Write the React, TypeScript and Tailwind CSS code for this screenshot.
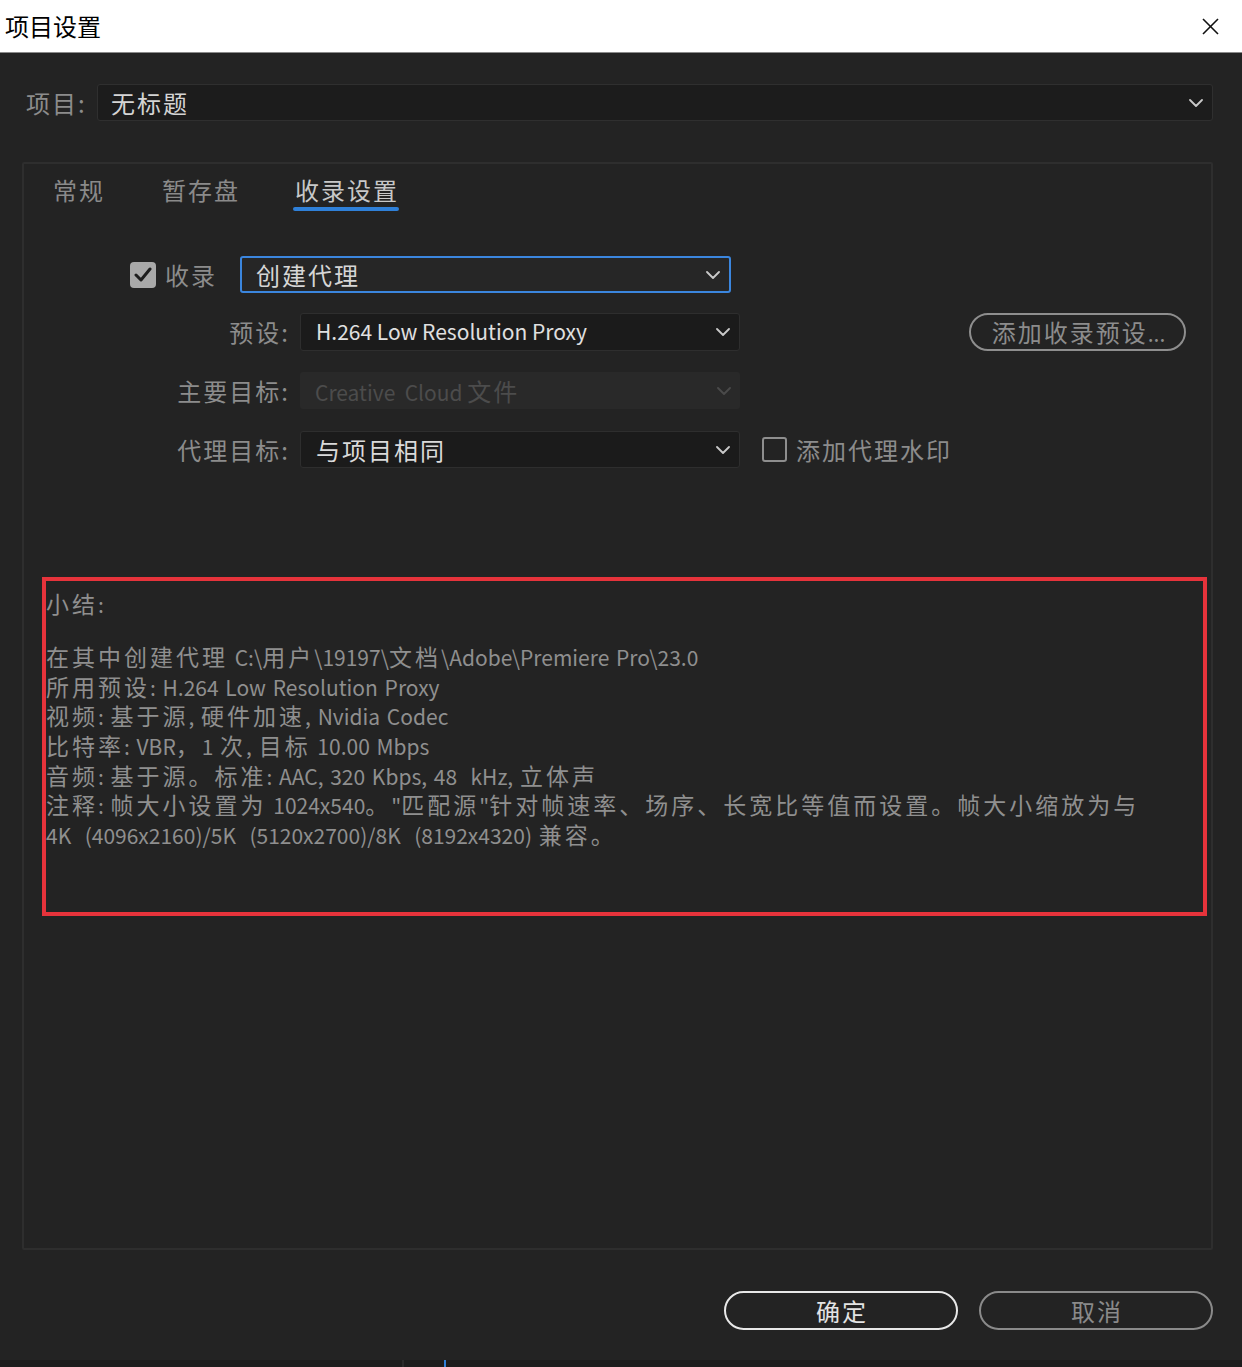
import React from "react";

const CJK_RE = /([\u3000-\u303f\u3400-\u9fff\uff00-\uffef]+)/;

function Mixed({ text, cjk }: { text: string; cjk: string }) {
  const parts = text.split(CJK_RE);
  return (
    <>
      {parts.map((p, i) =>
        p === "" ? null : CJK_RE.test(p) ? (
          <span key={i} className={cjk}>
            {p}
          </span>
        ) : (
          <React.Fragment key={i}>{p}</React.Fragment>
        )
      )}
    </>
  );
}

const Chevron = ({ color = "#c9c9c9" }: { color?: string }) => (
  <svg width="14" height="8" viewBox="0 0 14 8" fill="none">
    <polyline points="1,1 7,7 13,1" stroke={color} strokeWidth="1.8" strokeLinecap="round" strokeLinejoin="round" />
  </svg>
);

const summary = [
  "在其中创建代理 C:\\用户\\19197\\文档\\Adobe\\Premiere Pro\\23.0",
  "所用预设: H.264 Low Resolution Proxy",
  "视频: 基于源, 硬件加速, Nvidia Codec",
  "比特率: VBR，1 次, 目标 10.00 Mbps",
  "音频: 基于源。标准: AAC, 320 Kbps, 48  kHz, 立体声",
  "注释: 帧大小设置为 1024x540。\"匹配源\"针对帧速率、场序、长宽比等值而设置。帧大小缩放为与",
  "4K  (4096x2160)/5K  (5120x2700)/8K  (8192x4320) 兼容。",
];

export default function App() {
  return (
    <div className="w-[1242px] h-[1367px] bg-[#232323] flex flex-col font-['Noto_Sans_CJK_SC','Noto_Sans',sans-serif] overflow-hidden">
      {/* Title bar */}
      <div className="h-[53px] bg-white border-b border-[#8a8a8a] flex items-center justify-between pl-[5px] pr-[23px] shrink-0">
        <span className="text-[24px] text-black leading-none">项目设置</span>
        <svg width="17" height="17" viewBox="0 0 17 17">
          <line x1="1" y1="1" x2="16" y2="16" stroke="#111" strokeWidth="1.6" />
          <line x1="16" y1="1" x2="1" y2="16" stroke="#111" strokeWidth="1.6" />
        </svg>
      </div>

      <div className="flex-1 flex flex-col pl-[22px] pr-[29px]">
        {/* Project row */}
        <div className="mt-[31px] flex items-center h-[37px] pl-[4px]">
          <span className="text-[24px] tracking-[2px] text-[#8c8c8c] w-[71px]">项目:</span>
          <div className="flex-1 h-[37px] bg-[#1c1c1c] border border-[#2f2f2f] rounded-[3px] flex items-center justify-between pl-[13px] pr-[9px]">
            <span className="text-[24px] tracking-[2px] text-[#d4d4d4]">无标题</span>
            <Chevron />
          </div>
        </div>

        {/* Panel */}
        <div className="mt-[41px] h-[1088px] border-2 border-[#2e2e2e] rounded-[2px] flex flex-col">
          {/* Tabs */}
          <div className="flex items-start pl-[29px] mt-[10px] h-[37px]">
            <span className="text-[24px] tracking-[2px] text-[#8a8a8a] leading-[32px]">常规</span>
            <span className="text-[24px] tracking-[2px] text-[#8a8a8a] leading-[32px] ml-[57px]">暂存盘</span>
            <div className="ml-[53px] flex flex-col">
              <span className="text-[24px] tracking-[2px] text-[#c8c8c8] leading-[32px] pl-[2px]">收录设置</span>
              <div className="h-[4px] bg-[#2f80d8] rounded-full mt-[1px]" />
            </div>
          </div>

          {/* Row 1 */}
          <div className="mt-[45px] flex items-center h-[37px]">
            <div className="ml-[106px] w-[26px] h-[26px] bg-[#a9a9a9] rounded-[4px] flex items-center justify-center">
              <svg width="18" height="16" viewBox="0 0 18 16">
                <polyline points="2,8 7,13 16,2" fill="none" stroke="#1e1e1e" strokeWidth="3" strokeLinecap="round" strokeLinejoin="round" />
              </svg>
            </div>
            <span className="ml-[9px] text-[24px] tracking-[2px] text-[#8c8c8c]">收录</span>
            <div className="ml-[23px] w-[491px] h-[37px] bg-[#262626] border-2 border-[#3b86de] rounded-[3px] flex items-center justify-between pl-[14px] pr-[9px]">
              <span className="text-[24px] tracking-[2px] text-[#d6d6d6]">创建代理</span>
              <Chevron />
            </div>
          </div>

          {/* Row 2 */}
          <div className="mt-[20px] flex items-center h-[38px]">
            <span className="w-[266px] text-right text-[24px] tracking-[2px] text-[#8c8c8c]">预设:</span>
            <div className="ml-[10px] w-[440px] h-[38px] bg-[#1b1b1b] border border-[#2e2e2e] rounded-[3px] flex items-center justify-between pl-[15px] pr-[9px]">
              <span className="text-[21px] text-[#e0e0e0]">H.264 Low Resolution Proxy</span>
              <Chevron />
            </div>
            <div className="ml-auto mr-[25px] w-[217px] h-[38px] border-2 border-[#8e8e8e] rounded-full flex items-center justify-center pl-[2px]">
              <span className="text-[21px] text-[#8c8c8c] leading-none">
                <span className="text-[24px] tracking-[2px]">添加收录预设</span>...
              </span>
            </div>
          </div>

          {/* Row 3 */}
          <div className="mt-[21px] flex items-center h-[37px]">
            <span className="w-[266px] text-right text-[24px] tracking-[2px] text-[#8c8c8c]">主要目标:</span>
            <div className="ml-[10px] w-[440px] h-[37px] bg-[#292929] rounded-[3px] flex items-center justify-between pl-[15px] pr-[9px]">
              <span className="text-[21px] text-[#4c4c4c] whitespace-pre">
                Creative  Cloud <span className="text-[24px] tracking-[2px]">文件</span>
              </span>
              <Chevron color="#4a4a4a" />
            </div>
          </div>

          {/* Row 4 */}
          <div className="mt-[22px] flex items-center h-[37px]">
            <span className="w-[266px] text-right text-[24px] tracking-[2px] text-[#8c8c8c]">代理目标:</span>
            <div className="ml-[10px] w-[440px] h-[37px] bg-[#1b1b1b] border border-[#2e2e2e] rounded-[3px] flex items-center justify-between pl-[15px] pr-[9px]">
              <span className="text-[24px] tracking-[2px] text-[#dadada]">与项目相同</span>
              <Chevron />
            </div>
            <div className="ml-[22px] w-[25px] h-[25px] border-2 border-[#8e8e8e] rounded-[3px]" />
            <span className="ml-[9px] text-[24px] tracking-[2px] text-[#8c8c8c]">添加代理水印</span>
          </div>

          {/* Summary (highlighted) */}
          <div className="mt-[109px] ml-[18px] mr-[4px] h-[339px] border-4 border-[#e6333b] pt-[8px] text-[21px] text-[#8f8f8f] leading-[29.7px] whitespace-pre [word-spacing:2px]">
            <div className="h-[29.7px]">
              <Mixed text="小结:" cjk="text-[23px] tracking-[3px]" />
            </div>
            <div className="mt-[23.3px]">
              {summary.map((line, i) => (
                <div key={i} className="h-[29.7px]">
                  <Mixed text={line} cjk="text-[23px] tracking-[3px]" />
                </div>
              ))}
            </div>
          </div>
        </div>

        {/* Buttons */}
        <div className="mt-[41px] flex justify-end gap-[21px]">
          <div className="w-[234px] h-[39px] border-2 border-[#e8e8e8] rounded-full flex items-center justify-center pl-[2px]">
            <span className="text-[24px] tracking-[2px] text-[#e4e4e4] leading-none">确定</span>
          </div>
          <div className="w-[234px] h-[39px] border-2 border-[#8a8a8a] rounded-full flex items-center justify-center pl-[2px]">
            <span className="text-[24px] tracking-[2px] text-[#8a8a8a] leading-none">取消</span>
          </div>
        </div>
      </div>

      {/* Bottom strip */}
      <div className="h-[7px] bg-[#1c1c1c] flex shrink-0">
        <div className="ml-[402px] w-[2px] h-full bg-[#2a2a2a]" />
        <div className="ml-[40px] w-[2px] h-full bg-[#2f80d8]" />
      </div>
    </div>
  );
}
